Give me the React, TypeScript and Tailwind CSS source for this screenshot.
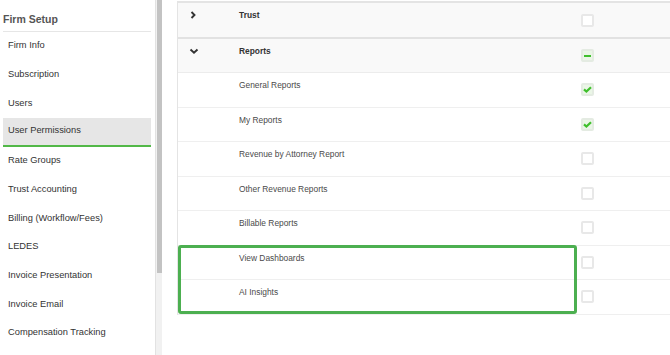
import React from "react"

const menu = [
  "Firm Info",
  "Subscription",
  "Users",
  "User Permissions",
  "Rate Groups",
  "Trust Accounting",
  "Billing (Workflow/Fees)",
  "LEDES",
  "Invoice Presentation",
  "Invoice Email",
  "Compensation Tracking",
]

const reports = [
  { name: "General Reports", checked: true },
  { name: "My Reports", checked: true },
  { name: "Revenue by Attorney Report", checked: false },
  { name: "Other Revenue Reports", checked: false },
  { name: "Billable Reports", checked: false },
  { name: "View Dashboards", checked: false },
  { name: "AI Insights", checked: false },
]

type BoxState = "off" | "on" | "mixed"

const Box = ({ state }: { state: BoxState }) => {
  if (state === "off") {
    return <div className="w-[13px] h-[13px] border-2 border-[#e8e8e8] rounded-[2px] bg-white" />
  }
  return (
    <div className="w-[13px] h-[13px] border-2 border-[#e4ebe2] rounded-[2px] bg-[#eaf6e6] flex items-center justify-center">
      {state === "on" ? (
        <svg width="9" height="9" viewBox="0 0 9 9">
          <path d="M1 4.4 L3.4 6.6 L8 2.2" fill="none" stroke="#3fbf2c" strokeWidth="2.2" />
        </svg>
      ) : (
        <div className="w-[7px] h-[2px] bg-[#3fbf2c]" />
      )}
    </div>
  )
}

const Row = ({
  label,
  state,
  chevron,
  header,
  last,
}: {
  label: string
  state: BoxState
  chevron?: "right" | "down"
  header?: boolean
  last?: boolean
}) => {
  return (
    <div
      className={
        header
          ? `flex bg-[#f9f9f9] ${last ? "h-[34px] border-b border-[#ececec]" : "h-[36px] border-b-2 border-[#e2e2e2]"}`
          : "flex h-[34.5px] bg-white border-b border-[#efefef]"
      }
    >
      <div className="w-[61px] pl-[11px] pt-[8px]">
        {chevron === "right" && (
          <svg width="8" height="8" viewBox="0 0 8 8">
            <path d="M2.5 1 L5.5 4 L2.5 7" fill="none" stroke="#333" strokeWidth="1.9" />
          </svg>
        )}
        {chevron === "down" && (
          <svg width="10" height="8" viewBox="0 0 10 8">
            <path d="M1.5 2.5 L5 5.8 L8.5 2.5" fill="none" stroke="#333" strokeWidth="1.9" />
          </svg>
        )}
      </div>
      <div
        className={`w-[342px] pt-[7px] leading-[10px] ${
          header ? "text-[8.4px] font-bold text-[#333]" : "text-[8.4px] text-[#4a4a4a]"
        }`}
      >
        {label}
      </div>
      <div className="flex-1 flex items-center">
        <Box state={state} />
      </div>
    </div>
  )
}

export default function App() {
  return (
    <div
      className="flex w-[670px] h-[355px] overflow-hidden bg-white"
      style={{ fontFamily: '"Liberation Sans", Arial, sans-serif' }}
    >
      {/* sidebar */}
      <div className="w-[155px] pl-[3px] pr-[4px] bg-white">
        <div className="h-[32px] flex items-end pb-[6px] border-b border-[#e6e6e6] text-[10.5px] leading-[12px] font-bold text-[#555]">
          Firm Setup
        </div>
        {menu.map((item) => (
          <div
            key={item}
            className={`h-[28.7px] flex items-center pl-[5px] text-[9.3px] text-[#333] ${
              item === "User Permissions" ? "bg-[#e6e6e6] border-b-2 border-[#52b848]" : ""
            }`}
          >
            {item}
          </div>
        ))}
      </div>

      {/* scrollbar */}
      <div className="w-[7px] bg-[#f1f1f1] border-l border-[#e2e2e2] flex flex-col">
        <div className="h-[273px] w-[5px] mx-auto bg-[#c3c3c3]" />
      </div>

      {/* permissions table */}
      <div className="relative flex-1 pl-[15px] pt-[1px] bg-white">
        <div className="border-l border-t-2 border-[#e4e4e4]">
          <Row label="Trust" state="off" chevron="right" header />
          <Row label="Reports" state="mixed" chevron="down" header last />
          {reports.map((r) => (
            <Row key={r.name} label={r.name} state={r.checked ? "on" : "off"} />
          ))}
        </div>
        <div className="absolute left-[16px] top-[245px] w-[399px] h-[69px] border-[3px] border-[#4caf50] rounded-[3px]" />
      </div>
    </div>
  )
}
